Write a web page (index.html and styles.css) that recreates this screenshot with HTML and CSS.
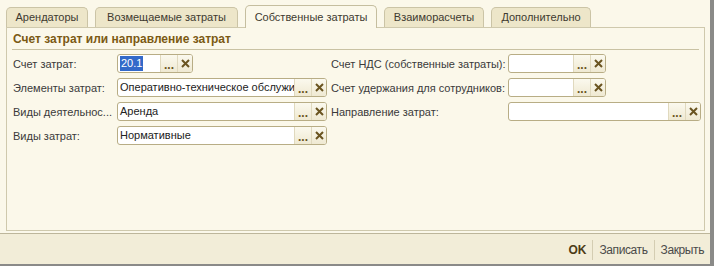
FILE: index.html
```html
<!DOCTYPE html>
<html lang="ru">
<head>
<meta charset="utf-8">
<link rel="stylesheet" href="styles.css">
</head>
<body>
<div class="window">
  <div class="tabs">
    <div class="tab t1">Арендаторы</div>
    <div class="tab t2">Возмещаемые затраты</div>
    <div class="tab t3 active">Собственные затраты</div>
    <div class="tab t4">Взаиморасчеты</div>
    <div class="tab t5">Дополнительно</div>
  </div>
  <div class="panel">
    <div class="group-title">Счет затрат или направление затрат</div>
    <div class="group-line"></div>
    <div class="cols">
      <div class="col left">
        <div class="row">
          <span class="label">Счет затрат:</span>
          <div class="field w-short"><span class="val"><span class="sel">20.1</span></span><span class="btn dots">...</span><span class="btn x"><svg width="9" height="9" viewBox="0 0 9 9"><path d="M1 1L8 8M8 1L1 8" stroke="#6a5420" stroke-width="2"/></svg></span></div>
        </div>
        <div class="row">
          <span class="label">Элементы затрат:</span>
          <div class="field w-long"><span class="val">Оперативно-техническое обслужи</span><span class="btn dots">...</span><span class="btn x"><svg width="9" height="9" viewBox="0 0 9 9"><path d="M1 1L8 8M8 1L1 8" stroke="#6a5420" stroke-width="2"/></svg></span></div>
        </div>
        <div class="row">
          <span class="label">Виды деятельнос...</span>
          <div class="field w-long"><span class="val">Аренда</span><span class="btn dots">...</span><span class="btn x"><svg width="9" height="9" viewBox="0 0 9 9"><path d="M1 1L8 8M8 1L1 8" stroke="#6a5420" stroke-width="2"/></svg></span></div>
        </div>
        <div class="row">
          <span class="label">Виды затрат:</span>
          <div class="field w-long"><span class="val">Нормативные</span><span class="btn dots">...</span><span class="btn x"><svg width="9" height="9" viewBox="0 0 9 9"><path d="M1 1L8 8M8 1L1 8" stroke="#6a5420" stroke-width="2"/></svg></span></div>
        </div>
      </div>
      <div class="col right">
        <div class="row">
          <span class="label rl">Счет НДС (собственные затраты):</span>
          <div class="field w-mid"><span class="val"></span><span class="btn dots">...</span><span class="btn x"><svg width="9" height="9" viewBox="0 0 9 9"><path d="M1 1L8 8M8 1L1 8" stroke="#6a5420" stroke-width="2"/></svg></span></div>
        </div>
        <div class="row">
          <span class="label rl">Счет удержания для сотрудников:</span>
          <div class="field w-mid"><span class="val"></span><span class="btn dots">...</span><span class="btn x"><svg width="9" height="9" viewBox="0 0 9 9"><path d="M1 1L8 8M8 1L1 8" stroke="#6a5420" stroke-width="2"/></svg></span></div>
        </div>
        <div class="row">
          <span class="label rl">Направление затрат:</span>
          <div class="field w-wide"><span class="val"></span><span class="btn dots">...</span><span class="btn x"><svg width="9" height="9" viewBox="0 0 9 9"><path d="M1 1L8 8M8 1L1 8" stroke="#6a5420" stroke-width="2"/></svg></span></div>
        </div>
      </div>
    </div>
  </div>
  <div class="footer">
    <span class="fbtn ok">OK</span>
    <span class="fsep"></span>
    <span class="fbtn">Записать</span>
    <span class="fsep"></span>
    <span class="fbtn">Закрыть</span>
  </div>
</div>
</body>
</html>
```

FILE: styles.css
```css
html, body {
  margin: 0;
  padding: 0;
  background: #fbf8ea;
}
body {
  font-family: "Liberation Sans", Arial, sans-serif;
  font-size: 11px;
  color: #3c3c3c;
}
.window {
  width: 710px;
  height: 264px;
  border-right: 4px solid #8a8a88;
  border-bottom: 2px solid #8a8a88;
  display: flex;
  flex-direction: column;
  background: #fbf8ea;
}
.tabs {
  display: flex;
  align-items: flex-end;
  padding: 6px 0 0 6px;
  height: 21px;
  position: relative;
  z-index: 1;
}
.tab {
  box-sizing: border-box;
  height: 20px;
  line-height: 19px;
  text-align: center;
  white-space: nowrap;
  background: #ede6c9;
  border: 1px solid #cbc4a6;
  border-bottom: none;
  border-radius: 5px 5px 0 0;
  color: #403a30;
  margin-right: 7px;
}
.t1 { width: 82px; }
.t2 { width: 143px; }
.t4 { width: 100px; }
.t5 { width: 100px; }
.tab.active {
  background: #fbf8ea;
  height: 23px;
  line-height: 22px;
  width: 132px;
  margin-bottom: -1px;
  border-color: #c5be9f;
}
.panel {
  margin: 0 5px 0 6px;
  height: 204px;
  border: 1px solid #cfc9ad;
  box-sizing: border-box;
  background: #fbf8ea;
  padding: 4px 5px 0 5px;
}
.group-title {
  font-weight: bold;
  color: #7b5a14;
  font-size: 12px;
  line-height: 14px;
  padding-left: 1px;
}
.group-line {
  height: 1px;
  background: #c9c2a3;
  margin: 3px 0 4px 0;
}
.cols {
  display: flex;
}
.col {
  display: flex;
  flex-direction: column;
  gap: 5px;
}
.col.left { width: 315px; }
.col.right { padding-left: 3px; }
.row {
  display: flex;
  align-items: center;
  height: 19px;
}
.label {
  width: 104px;
  white-space: nowrap;
  color: #3a3a3a;
  padding-left: 1px;
}
.label.rl { width: 177px; }
.field {
  display: flex;
  height: 19px;
  box-sizing: border-box;
  border: 1px solid #b8ad85;
  border-radius: 3px;
  background: #ffffff;
  overflow: hidden;
}
.w-short { width: 76px; }
.w-long { width: 210px; }
.w-mid { width: 98px; }
.w-wide { width: 193px; }
.val {
  flex: 1;
  line-height: 17px;
  padding-left: 2px;
  white-space: nowrap;
  overflow: hidden;
  color: #222;
}
.sel {
  background: #3269c9;
  color: #fff;
  padding: 0 1px;
  display: inline-block;
  line-height: 15px;
  margin-top: 1px;
}
.btn {
  width: 16px;
  display: flex;
  align-items: center;
  justify-content: center;
  background: linear-gradient(#fbf9ee, #efe9d2);
  color: #6a5420;
  font-weight: bold;
  border-left: 1px solid #e0d9be;
}
.btn.dots {
  align-items: flex-end;
  line-height: 14px;
  font-size: 12px;
}
.btn.x {
  width: 14px;
}
.footer {
  flex: 1;
  border-top: 1px solid #bdb69b;
  margin-top: 2px;
  background: #f2edd8;
  display: flex;
  align-items: center;
  justify-content: flex-end;
  padding-right: 6px;
  padding-top: 1px;
}
.fbtn {
  color: #4a4a48;
  font-size: 12px;
  letter-spacing: -0.4px;
}
.fbtn.ok {
  font-weight: bold;
  color: #4d3c16;
  letter-spacing: 0;
}
.fsep {
  width: 1px;
  height: 20px;
  background: #d4cdb2;
  margin: 0 6px;
}
```
